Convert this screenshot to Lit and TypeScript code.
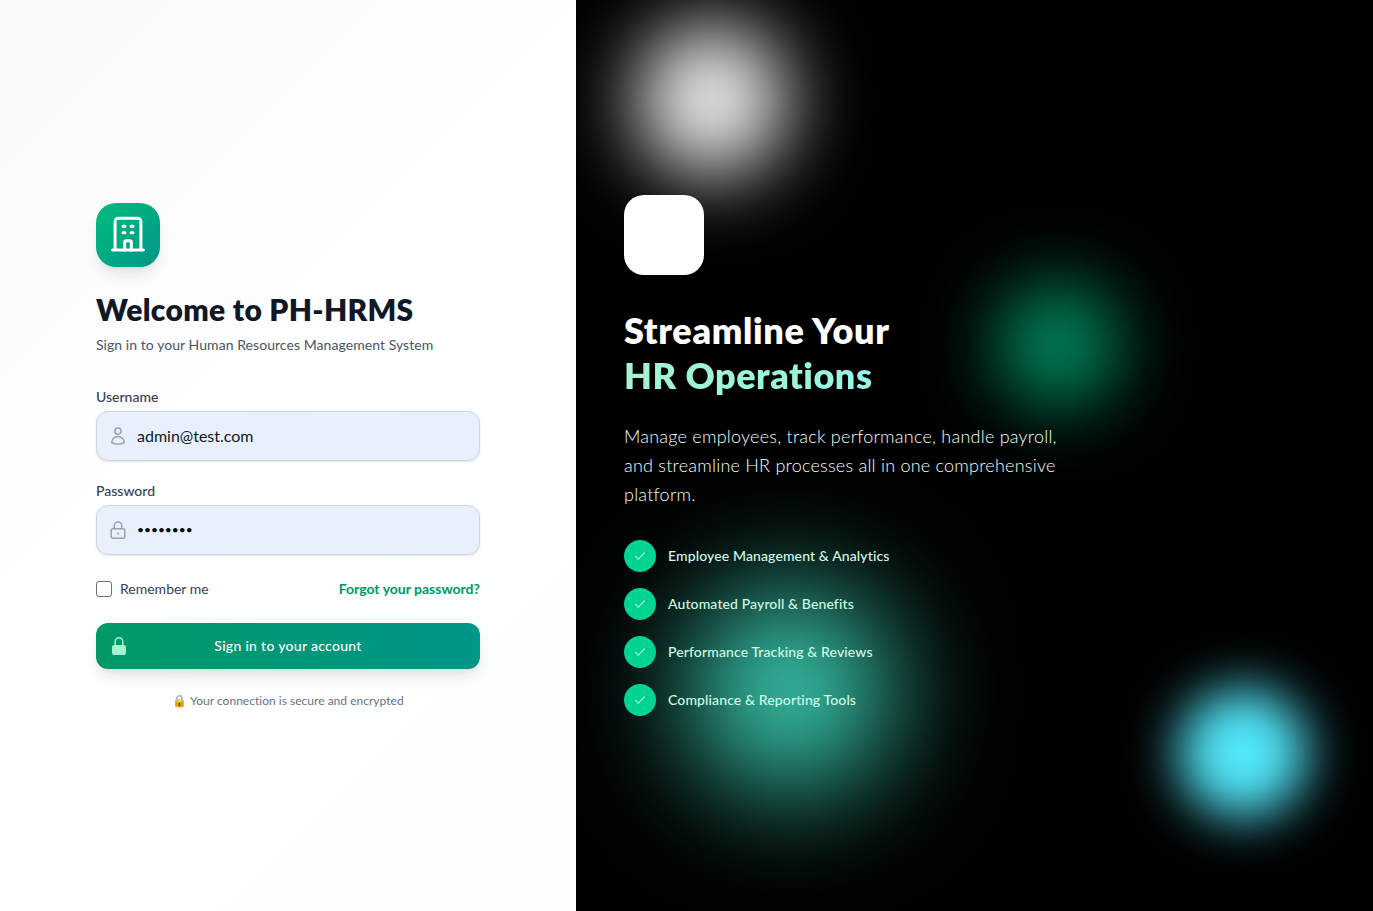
import { LitElement, css, html } from 'lit';
import { customElement } from 'lit/decorators.js';

const features = [
  'Employee Management & Analytics',
  'Automated Payroll & Benefits',
  'Performance Tracking & Reviews',
  'Compliance & Reporting Tools',
];

@customElement('app-root')
export class AppRoot extends LitElement {
  render() {
    return html`
      <div class="page">
        <section class="left">
          <div class="form">
            <div class="logo">
              <svg viewBox="0 0 24 24" width="40" height="40" fill="none" stroke="#fff" stroke-width="1.8" stroke-linecap="round" stroke-linejoin="round">
                <path d="M2.750 21h18.500M4.250 21V3.800A1.800 1.800 0 0 1 6.050 2h11.900a1.800 1.800 0 0 1 1.800 1.800V21" />
                <path d="M10 21v-4.500a1 1 0 0 1 1-1h2a1 1 0 0 1 1 1V21" />
                <path d="M9 6.700h1.200M13.800 6.700h1.200M9 10.700h1.200M13.800 10.700h1.200" />
              </svg>
            </div>
            <h1>Welcome to PH-HRMS</h1>
            <p class="sub">Sign in to your Human Resources Management System</p>

            <label class="field-label">Username</label>
            <div class="input">
              <svg viewBox="0 0 24 24" width="20" height="20" fill="none" stroke="#99a1af" stroke-width="1.8" stroke-linecap="round" stroke-linejoin="round">
                <path d="M15.750 6a3.750 3.750 0 1 1-7.500 0 3.750 3.750 0 0 1 7.500 0Z" />
                <path d="M4.500 20.100a7.500 7.500 0 0 1 15 0A18.700 18.700 0 0 1 12 21.750c-2.700 0-5.200-.6-7.500-1.650Z" />
              </svg>
              <span class="value">admin@test.com</span>
            </div>

            <label class="field-label second">Password</label>
            <div class="input">
              <svg viewBox="0 0 24 24" width="20" height="20" fill="none" stroke="#99a1af" stroke-width="1.8" stroke-linecap="round" stroke-linejoin="round">
                <path d="M16.500 10.500V6.750a4.500 4.500 0 1 0-9 0v3.750" />
                <rect x="3.750" y="10.500" width="16.500" height="11.250" rx="2.250" />
                <path d="M12 15.500v1.500" />
              </svg>
              <span class="value dots">••••••••</span>
            </div>

            <div class="row">
              <label class="remember"><span class="check"></span>Remember me</label>
              <a class="forgot">Forgot your password?</a>
            </div>

            <button class="submit">
              <svg class="btn-lock" viewBox="0 0 20 20" width="20" height="20" fill="#a4f4cf">
                <path fill-rule="evenodd" clip-rule="evenodd" d="M10 1a4.500 4.500 0 0 0-4.500 4.500V9H5a2 2 0 0 0-2 2v6a2 2 0 0 0 2 2h10a2 2 0 0 0 2-2v-6a2 2 0 0 0-2-2h-.5V5.500A4.500 4.500 0 0 0 10 1Zm3 8V5.500a3 3 0 1 0-6 0V9h6Z" />
              </svg>
              Sign in to your account
            </button>

            <p class="secure">🔒 Your connection is secure and encrypted</p>
          </div>
        </section>

        <section class="right">
          <div class="blob white"></div>
          <div class="blob green"></div>
          <div class="blob teal"></div>
          <div class="blob cyan"></div>
          <div class="content">
            <div class="badge"></div>
            <h2>Streamline Your<br /><span>HR Operations</span></h2>
            <p class="lead">Manage employees, track performance, handle payroll, and streamline HR processes all in one comprehensive platform.</p>
            <ul>
              ${features.map(
                (f) => html`<li>
                  <span class="tick">
                    <svg viewBox="0 0 20 20" width="16" height="16" fill="none" stroke="#a4f4cf" stroke-width="1.500" stroke-linecap="round" stroke-linejoin="round">
                      <path d="M4.500 10.500l3.500 3.500 7.500-8" />
                    </svg>
                  </span>
                  <span class="feature">${f}</span>
                </li>`
              )}
            </ul>
          </div>
        </section>
      </div>
    `;
  }

  static styles = css`
    :host {
      display: block;
      font-family: Lato, 'Noto Sans', sans-serif;
    }

    * {
      box-sizing: border-box;
    }

    .page {
      display: flex;
      height: 911px;
      overflow: hidden;
    }

    .left {
      width: 576px;
      flex: none;
      display: flex;
      align-items: center;
      justify-content: center;
      background: linear-gradient(135deg, #f9fafb 0%, #ffffff 50%, #fbfdfe 100%);
    }

    .form {
      width: 384px;
    }

    .logo {
      width: 64px;
      height: 64px;
      border-radius: 20px;
      display: flex;
      align-items: center;
      justify-content: center;
      background: linear-gradient(135deg, #00bc7d, #009689);
      box-shadow: 0 10px 15px -3px rgba(0, 0, 0, 0.1), 0 4px 6px -4px rgba(0, 0, 0, 0.1);
      margin-bottom: 24px;
    }

    h1 {
      margin: 0 0 8px;
      font-size: 30px;
      line-height: 36px;
      font-weight: 800;
      letter-spacing: 0.3px;
      color: #101828;
    }

    .sub {
      margin: 0 0 32px;
      font-size: 14px;
      line-height: 20px;
      letter-spacing: 0.06px;
      color: #4a5565;
    }

    .field-label {
      display: block;
      margin-bottom: 4px;
      font-size: 14px;
      line-height: 20px;
      font-weight: 500;
      color: #364153;
    }

    .second {
      margin-top: 20px;
    }

    .input {
      height: 50px;
      display: flex;
      align-items: center;
      gap: 9px;
      padding: 0 11px;
      background: #e8f0fe;
      border: 1px solid #d1d5dc;
      border-radius: 12px;
      box-shadow: 0 1px 2px rgba(0, 0, 0, 0.1);
    }

    .value {
      font-size: 16px;
      color: #101828;
    }

    .dots {
      font-size: 12px;
      color: #000;
    }

    .row {
      display: flex;
      justify-content: space-between;
      align-items: center;
      margin-top: 24px;
      font-size: 14px;
      line-height: 20px;
    }

    .remember {
      display: flex;
      align-items: center;
      gap: 8px;
      color: #364153;
    }

    .check {
      width: 16px;
      height: 16px;
      background: #fff;
      border: 1px solid #6a7282;
      border-radius: 3px;
    }

    .forgot {
      font-weight: 700;
      color: #009966;
    }

    .submit {
      position: relative;
      display: block;
      width: 100%;
      height: 46px;
      margin-top: 24px;
      border: 0;
      border-radius: 12px;
      font: inherit;
      font-size: 14px;
      font-weight: 500;
      letter-spacing: 0.3px;
      color: #fff;
      background: linear-gradient(90deg, #009966, #009689);
      box-shadow: 0 10px 15px -3px rgba(0, 0, 0, 0.1), 0 4px 6px -4px rgba(0, 0, 0, 0.1);
    }

    .btn-lock {
      position: absolute;
      left: 13px;
      top: 13px;
    }

    .secure {
      margin: 24px 0 0;
      text-align: center;
      font-size: 12px;
      line-height: 16px;
      letter-spacing: 0.02px;
      color: #6a7282;
    }

    .right {
      position: relative;
      flex: 1;
      display: flex;
      align-items: center;
      padding: 0 48px;
      background: #000;
      overflow: hidden;
    }

    .blob {
      position: absolute;
      border-radius: 50%;
    }

    .white {
      left: 60px;
      top: 24px;
      width: 152px;
      height: 152px;
      background: rgba(255, 255, 255, 0.94);
      filter: blur(40px);
    }

    .green {
      left: 420px;
      top: 283px;
      width: 124px;
      height: 124px;
      background: #008860;
      filter: blur(36px);
    }

    .teal {
      left: 114px;
      top: 590px;
      width: 200px;
      height: 200px;
      background: #3dd5b9;
      filter: blur(60px);
    }

    .cyan {
      left: 602px;
      top: 688px;
      width: 130px;
      height: 130px;
      background: #53eafd;
      filter: blur(26px);
    }

    .content {
      position: relative;
    }

    .badge {
      width: 80px;
      height: 80px;
      border-radius: 20px;
      background: #fff;
      margin-bottom: 33px;
    }

    h2 {
      margin: 0 0 24px;
      font-size: 36px;
      line-height: 45px;
      font-weight: 800;
      letter-spacing: 0.65px;
      color: #fff;
    }

    h2 span {
      letter-spacing: 0.5px;
      background: linear-gradient(90deg, #a4f4cf, #96f7e4);
      -webkit-background-clip: text;
      background-clip: text;
      color: transparent;
    }

    .lead {
      max-width: 448px;
      margin: 0 0 31px;
      font-size: 18px;
      line-height: 29px;
      font-weight: 300;
      letter-spacing: 0.23px;
      color: #f4fffa;
    }

    ul {
      list-style: none;
      margin: 0;
      padding: 0;
      display: flex;
      flex-direction: column;
      gap: 16px;
    }

    li {
      display: flex;
      align-items: center;
      gap: 12px;
      font-size: 14px;
      font-weight: 500;
      letter-spacing: 0.12px;
      color: #d0fae5;
    }

    .feature {
      margin-top: -2px;
    }

    .tick {
      width: 32px;
      height: 32px;
      border-radius: 50%;
      display: flex;
      align-items: center;
      justify-content: center;
      background: #00d492;
    }
  `;
}

declare global {
  interface HTMLElementTagNameMap {
    'app-root': AppRoot;
  }
}
